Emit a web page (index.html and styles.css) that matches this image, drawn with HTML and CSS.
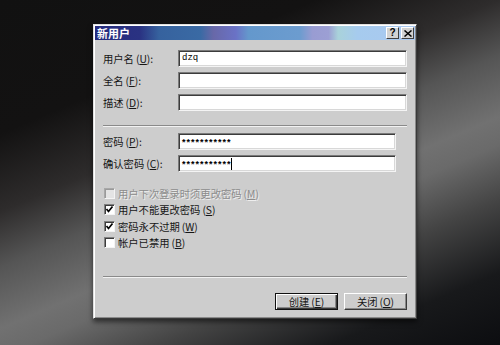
FILE: index.html
```html
<!DOCTYPE html>
<html lang="zh-CN">
<head>
  <meta charset="UTF-8">
  <title>新用户</title>
  <link rel="stylesheet" href="styles.css">
</head>
<body>

  <div class="dialog">
    <div class="titlebar">
      <span class="title">新用户</span>
      <div class="caption-buttons">
        <span class="cap-btn help">?</span>
        <span class="cap-btn">
          <svg width="8" height="7" viewBox="0 0 8 7"><path d="M0.5 0.5 L7.5 6.5 M7.5 0.5 L0.5 6.5" stroke="#000" stroke-width="1.5"/></svg>
        </span>
      </div>
    </div>

    <div class="dialog-body">
      <div class="form-group">
        <div class="form-row">
          <label>用户名<span class="key">(<u>U</u>):</span></label>
          <div class="field mono">dzq</div>
        </div>
        <div class="form-row">
          <label>全名<span class="key">(<u>F</u>):</span></label>
          <div class="field"></div>
        </div>
        <div class="form-row">
          <label>描述<span class="key">(<u>D</u>):</span></label>
          <div class="field"></div>
        </div>
      </div>

      <div class="separator sep-top"></div>

      <div class="form-group">
        <div class="form-row">
          <label>密码<span class="key">(<u>P</u>):</span></label>
          <div class="field short stars">***********</div>
        </div>
        <div class="form-row">
          <label>确认密码<span class="key">(<u>C</u>):</span></label>
          <div class="field short stars">***********<span class="caret"></span></div>
        </div>
      </div>

      <div class="checks">
        <div class="check disabled">
          <span class="box"></span>
          <span>用户下次登录时须更改密码<span class="key">(<u>M</u>)</span></span>
        </div>
        <div class="check">
          <span class="box"><svg width="9" height="9" viewBox="0 0 9 9"><path d="M1.5 4 L3.5 6.5 L7.5 1.5" fill="none" stroke="#000" stroke-width="1.7"/></svg></span>
          <span>用户不能更改密码<span class="key">(<u>S</u>)</span></span>
        </div>
        <div class="check">
          <span class="box"><svg width="9" height="9" viewBox="0 0 9 9"><path d="M1.5 4 L3.5 6.5 L7.5 1.5" fill="none" stroke="#000" stroke-width="1.7"/></svg></span>
          <span>密码永不过期<span class="key">(<u>W</u>)</span></span>
        </div>
        <div class="check">
          <span class="box"></span>
          <span>帐户已禁用<span class="key">(<u>B</u>)</span></span>
        </div>
      </div>

      <div class="separator sep-bottom"></div>

      <div class="buttons">
        <button class="btn default">创建<span class="key">(<u>E</u>)</span></button>
        <button class="btn">关闭<span class="key">(<u>O</u>)</span></button>
      </div>
    </div>
  </div>

</body>
</html>
```

FILE: styles.css
```css
html, body {
  margin: 0;
  padding: 0;
  height: 345px;
  overflow: hidden;
}
body {
  font-family: "Noto Sans CJK SC", "Noto Sans", sans-serif;
  font-size: 10.3px;
  color: #161616;
  background: linear-gradient(157deg, #111 0%, #131212 24%, #2e2c2c 38%, #555 48%, #717171 59%, #6a6a6a 64%, #444 74%, #18191b 87%, #0c0d10 100%);
}
.dialog {
  box-sizing: border-box;
  width: 324px;
  height: 295px;
  margin: 24px 0 0 93px;
  padding: 1px;
  background: #cdcdcd;
  border: 1px solid;
  border-color: #e0e0e0 #3a3a3a #3a3a3a #e0e0e0;
  box-shadow: inset 1px 1px #fff, inset -1px -1px #8a8a8a, 0 3px 5px rgba(0, 0, 0, 0.55);
}
.titlebar {
  height: 14px;
  display: flex;
  align-items: center;
  justify-content: space-between;
  padding: 0 1px 0 2px;
  background: linear-gradient(to right, #262c7e 0%, #2a3282 14%, #36629e 20%, #3a6aa4 33%, #6868a8 37%, #6a72c6 44%, #6498cc 48%, #6c9ccf 64%, #999cd2 68%, #9c9fd4 73%, #a9d2da 76%, #a6cbee 82%, #aac8f0 100%);
}
.title {
  color: #fff;
  font-weight: bold;
  font-size: 11px;
  line-height: 14px;
}
.caption-buttons {
  display: flex;
  gap: 2px;
}
.cap-btn {
  box-sizing: border-box;
  width: 13px;
  height: 12px;
  display: flex;
  align-items: center;
  justify-content: center;
  background: #d2d2d2;
  border: 1px solid;
  border-color: #fff #404040 #404040 #fff;
  font-family: "Liberation Sans", sans-serif;
  font-weight: bold;
  font-size: 10px;
  line-height: 10px;
  color: #000;
}
.dialog-body {
  padding: 10px 8px 0 8px;
}
.form-group {
  display: flex;
  flex-direction: column;
  gap: 5px;
}
.form-row {
  display: flex;
  align-items: center;
}
.form-row label {
  width: 75px;
  flex: none;
}
.key {
  margin-left: 2px;
}
.field {
  box-sizing: border-box;
  flex: 1;
  height: 17px;
  padding: 1px 3px;
  background: #fff;
  border: 1px solid;
  border-color: #7a7a7a #f4f4f4 #f4f4f4 #7a7a7a;
  box-shadow: inset 1px 1px #3c3c3c, inset -1px -1px #d8d8d8;
  line-height: 12px;
}
.field.short {
  flex: none;
  width: 218px;
}
.mono {
  font-family: "Liberation Mono", monospace;
  font-size: 9px;
  color: #000;
}
.stars {
  font-family: "Liberation Sans", sans-serif;
  font-weight: bold;
  font-size: 9px;
  letter-spacing: 1px;
  color: #000;
  display: flex;
  align-items: center;
}
.caret {
  display: inline-block;
  width: 1px;
  height: 12px;
  background: #000;
  margin-left: -1px;
}
.separator {
  height: 1px;
  background: #8a8a8a;
  border-bottom: 1px solid #f2f2f2;
}
.sep-top {
  margin: 14px 0 6px;
}
.checks {
  margin-top: 13px;
  margin-left: 1px;
}
.check {
  height: 16.5px;
  display: flex;
  align-items: center;
  gap: 3px;
}
.box {
  box-sizing: border-box;
  width: 11px;
  height: 11px;
  display: flex;
  align-items: center;
  justify-content: center;
  background: #fff;
  border: 1px solid;
  border-color: #808080 #f4f4f4 #f4f4f4 #808080;
  box-shadow: inset 1px 1px #3c3c3c;
}
.check.disabled {
  color: #8c8c8c;
  text-shadow: 1px 1px #eee;
}
.check.disabled .box {
  background: #e4e4e4;
  border-color: #a8a8a8 #f4f4f4 #f4f4f4 #a8a8a8;
  box-shadow: inset 1px 1px #9a9a9a;
}
.sep-bottom {
  margin: 25px 0 15px;
}
.buttons {
  display: flex;
  justify-content: flex-end;
  gap: 6px;
}
.btn {
  box-sizing: border-box;
  width: 63px;
  height: 17px;
  padding: 0;
  font-family: inherit;
  font-size: 10.3px;
  color: #161616;
  background: #cdcdcd;
  border: 1px solid;
  border-color: #fff #3a3a3a #3a3a3a #fff;
  box-shadow: inset -1px -1px #888;
  line-height: 13px;
}
.btn.default {
  border: 1px solid #111;
  box-shadow: inset 1px 1px #fff, inset -1px -1px #3a3a3a, inset -2px -2px #888;
}
```
